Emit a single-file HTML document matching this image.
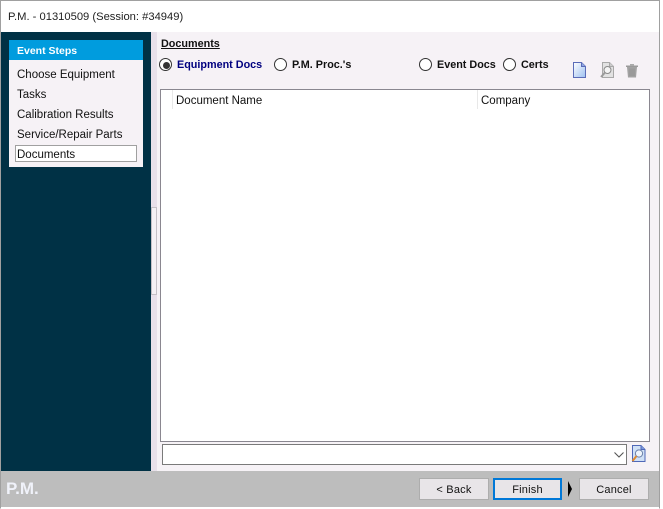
<!DOCTYPE html>
<html>
<head>
<meta charset="utf-8">
<style>
html,body{margin:0;padding:0;width:663px;height:509px;overflow:hidden;background:#fff}
body{font-family:"Liberation Sans",sans-serif;font-size:11.5px;color:#111;position:relative}
.a{position:absolute;white-space:nowrap}
.radio{position:absolute;width:11px;height:11px;border:1px solid #333;border-radius:50%;background:#fff;box-sizing:content-box}
.btn{position:absolute;box-sizing:border-box;height:22px;top:478px;background:#e8e5e8;border:1px solid #adadad;text-align:center;line-height:22px;font-size:11px;letter-spacing:.2px}
.b{font-weight:bold;font-size:10.8px}
</style>
</head>
<body>
<div class="a" style="left:0;top:0;width:660px;height:509px;box-sizing:border-box;border:1px solid #a0a0a0;border-bottom:1px solid #fff;background:#fff"></div>
<div class="a" style="left:8px;top:10px;font-size:11.2px;line-height:14px;color:#222">P.M. - 01310509 (Session: #34949)</div>

<div class="a" style="left:1px;top:32px;width:150px;height:439px;background:#003145"></div>
<div class="a" style="left:151px;top:32px;width:6px;height:439px;background:#e8e0ea"></div>
<div class="a" style="left:157px;top:32px;width:502px;height:439px;background:#f6f2f6"></div>
<div class="a" style="left:151px;top:207px;width:6px;height:88px;box-sizing:border-box;border:1px solid #c4c0c6;background:#f4f0f4"></div>

<div class="a" style="left:9px;top:40px;width:134px;height:127px;background:#f6f2f6"></div>
<div class="a" style="left:9px;top:40px;width:134px;height:20px;background:#009cde;color:#fff;font-weight:bold;font-size:10.5px;line-height:22px;text-indent:8px">Event Steps</div>
<div class="a" style="left:17px;top:69px">Choose Equipment</div>
<div class="a" style="left:17px;top:89px">Tasks</div>
<div class="a" style="left:17px;top:109px">Calibration Results</div>
<div class="a" style="left:17px;top:129px">Service/Repair Parts</div>
<div class="a" style="left:15px;top:145px;width:122px;height:17px;box-sizing:border-box;border:1px solid #a0a0a0;background:#fff;padding:2px 0 0 1px;line-height:15px">Documents</div>

<div class="a b" style="left:161px;top:38px;text-decoration:underline;color:#111">Documents</div>

<div class="radio" style="left:159px;top:58px"></div>
<div class="a" style="left:163px;top:62px;width:7px;height:7px;border-radius:50%;background:#333"></div>
<div class="a b" style="left:177px;top:59px;color:#00007f">Equipment Docs</div>
<div class="radio" style="left:274px;top:58px"></div>
<div class="a b" style="left:292px;top:59px">P.M. Proc.'s</div>
<div class="radio" style="left:419px;top:58px"></div>
<div class="a b" style="left:437px;top:59px">Event Docs</div>
<div class="radio" style="left:503px;top:58px"></div>
<div class="a b" style="left:521px;top:59px">Certs</div>

<svg class="a" style="left:572px;top:62px" width="16" height="17" viewBox="0 0 16 17">
<defs><linearGradient id="g" x1="0" y1="0" x2="1" y2="1"><stop offset="0" stop-color="#fff"/><stop offset="1" stop-color="#9cc0f0"/></linearGradient></defs>
<path d="M1.5.5H9.5L13.5 4.5V15.5H1.5Z" fill="url(#g)" stroke="#5a6cb8"/>
<path d="M9.5.5V4.5H13.5" fill="#8fa6e0" stroke="#5a6cb8"/>
</svg>
<svg class="a" style="left:600px;top:62px" width="15" height="17" viewBox="0 0 15 17">
<path d="M2.5.5H9.5L13.5 4.5V15.5H2.5Z" fill="#e2e2e2" stroke="#a8a8a8"/>
<path d="M9.5.5V4.5H13.5" fill="#ccc" stroke="#a8a8a8"/>
<circle cx="7.5" cy="8" r="3.5" fill="#f4f4f4" stroke="#8a8a8a"/>
<path d="M5 10.5L1 15" stroke="#9a9a9a" stroke-width="2"/>
</svg>
<svg class="a" style="left:625px;top:63px" width="14" height="15" viewBox="0 0 14 15">
<path d="M1 2.5H13V4H1Z" fill="#9a9a9a"/><rect x="5" y="1" width="4" height="2" fill="#aaa"/>
<path d="M2 4H12L11 14.5H3Z" fill="#a2a2a2"/>
<path d="M5 5.5V13M7 5.5V13M9 5.5V13" stroke="#929292"/>
</svg>

<div class="a" style="left:160px;top:89px;width:490px;height:353px;box-sizing:border-box;border:1px solid #8a8790;background:#fff"></div>
<div class="a" style="left:172px;top:90px;width:1px;height:19px;background:#e8e8e8"></div>
<div class="a" style="left:477px;top:90px;width:1px;height:19px;background:#e8e8e8"></div>
<div class="a" style="left:176px;top:95px">Document Name</div>
<div class="a" style="left:481px;top:95px">Company</div>

<div class="a" style="left:162px;top:444px;width:465px;height:21px;box-sizing:border-box;border:1px solid #7a7a7a;background:#fff"></div>
<svg class="a" style="left:613px;top:451px" width="12" height="8" viewBox="0 0 12 8"><path d="M1.5 1.5L6 6L10.5 1.5" fill="none" stroke="#555" stroke-width="1.1"/></svg>
<svg class="a" style="left:631px;top:445px" width="15" height="18" viewBox="0 0 15 18">
<path d="M1.5.5H10L14 4.5V16.5H1.5Z" fill="#cfe0f6" stroke="#4f68b8"/>
<path d="M10 .5V4.5H14" fill="#7f9ade" stroke="#4f68b8"/>
<circle cx="8" cy="8.5" r="3.6" fill="#eef4fb" stroke="#6a7fa8"/>
<path d="M5.5 11L1.5 16" stroke="#e08a30" stroke-width="2"/>
</svg>

<div class="a" style="left:1px;top:471px;width:658px;height:36px;background:#bdbdbd"></div>
<div class="a" style="left:6px;top:479px;font-weight:bold;font-size:17px;color:#f0f2fa">P.M.</div>
<div class="btn" style="left:419px;width:70px">&lt; Back</div>
<div class="btn" style="left:493px;width:69px;border:2px solid #0078d7;line-height:20px">Finish</div>
<svg class="a" style="left:567px;top:481px" width="6" height="16" viewBox="0 0 6 16"><path d="M1 0L5 8L1 16Z" fill="#000"/></svg>
<div class="btn" style="left:579px;width:70px">Cancel</div>
</body>
</html>
